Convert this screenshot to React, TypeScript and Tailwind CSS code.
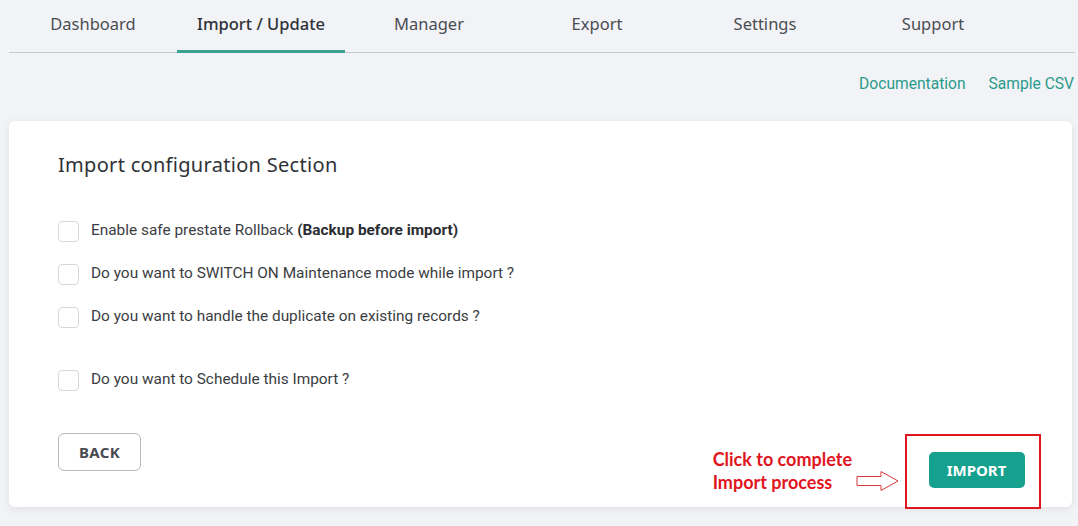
import React from "react";

const tabs = ["Dashboard", "Import / Update", "Manager", "Export", "Settings", "Support"];

function Check({ children, className = "" }: { children: React.ReactNode; className?: string }) {
  return (
    <div className={"flex items-center h-[22px] " + className}>
      <div className="w-[21px] h-[21px] rounded-[4px] border border-[#d6d8dc] bg-white shrink-0" />
      <div className="ml-[12px] text-[15.4px] text-[#3a3d42] leading-none">{children}</div>
    </div>
  );
}

export default function App() {
  return (
    <div className="w-[1078px] h-[526px] overflow-hidden bg-[#f2f3f7]">
      <div className="pl-[9px] pr-[3px]">
        <div className="flex border-b border-[#c8cacf] h-[53px] font-['Noto_Sans',sans-serif]">
          {tabs.map((t, i) => (
            <div
              key={t}
              className={
                "w-[168px] flex items-center justify-center text-[16.5px] pb-[4px] " +
                (i === 1
                  ? "text-[#2f3237] font-medium border-b-[3px] border-[#3aa192] -mb-px pt-[3px]"
                  : "text-[#4a4d52]")
              }
            >
              {t}
            </div>
          ))}
        </div>
      </div>
      <div className="flex justify-end pr-[4px] mt-[22px] gap-[23px] text-[15.6px] text-[#2a9a8a] font-['Roboto',sans-serif] h-[20px] items-center">
        <span>Documentation</span>
        <span>Sample CSV</span>
      </div>
      <div className="ml-[9px] mr-[6px] mt-[26px] h-[386px] bg-white rounded-[6px] shadow-[0_2px_8px_rgba(0,0,0,0.08)] pl-[49px] pt-[31px] font-['Roboto',sans-serif]">
        <div className="text-[20px] tracking-[0.3px] text-[#2f3237] font-['Noto_Sans',sans-serif] leading-[26px]">
          Import configuration Section
        </div>
        <Check className="mt-[42px]">
          Enable safe prestate Rollback <b className="font-bold text-[#2a2d32]">(Backup before import)</b>
        </Check>
        <Check className="mt-[21px]">Do you want to SWITCH ON Maintenance mode while import ?</Check>
        <Check className="mt-[21px]">Do you want to handle the duplicate on existing records ?</Check>
        <Check className="mt-[41px]">Do you want to Schedule this Import ?</Check>
        <div className="flex items-start mt-[42px]">
          <div className="w-[83px] h-[38px] border border-[#b9bbbf] rounded-[6px] flex items-center justify-center text-[15px] font-bold text-[#474a50] font-['Noto_Sans',sans-serif] tracking-[0.3px]">
            BACK
          </div>
          <div className="flex-1" />
          <div className="flex items-center mr-[31px] mt-[1px]">
            <div className="font-['Lato',sans-serif] font-bold text-[18px] leading-[23px] text-[#e0161f] mt-[-2px]">
              <div>Click to complete</div>
              <div>Import process</div>
            </div>
            <svg width="44" height="22" viewBox="0 0 44 22" className="ml-[4px] mt-[18px]">
              <path
                d="M1 6.5 H25 V1.5 L42 11 L25 20.5 V15.5 H1 Z"
                fill="white"
                stroke="#d9383d"
                strokeWidth="1"
              />
            </svg>
            <div className="ml-[5px] w-[136px] h-[75px] border-2 border-[#e0161f] flex items-center justify-center">
              <div className="ml-[7px] w-[96px] h-[36px] bg-[#16a08e] rounded-[5px] flex items-center justify-center text-white text-[15px] font-bold font-['Noto_Sans',sans-serif] mt-[-3px]">
                IMPORT
              </div>
            </div>
          </div>
        </div>
      </div>
    </div>
  );
}
